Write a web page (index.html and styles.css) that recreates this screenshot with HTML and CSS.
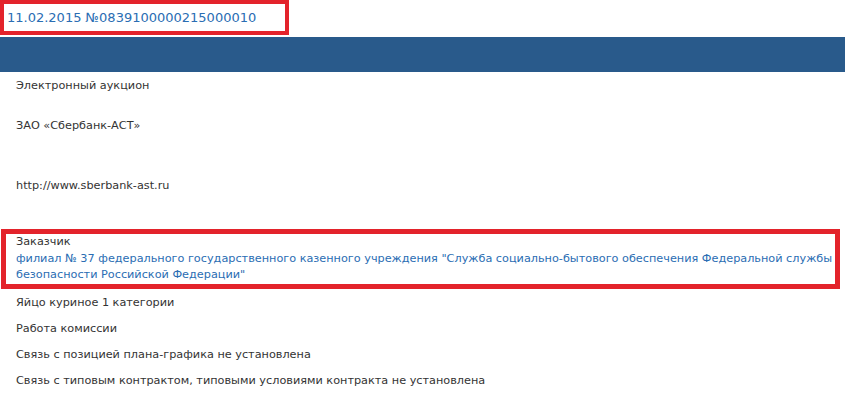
FILE: index.html
```html
<!DOCTYPE html>
<html lang="ru">
<head>
  <meta charset="UTF-8" />
  <title>Извещение 0839100000215000010</title>
  <link rel="stylesheet" href="styles.css">
</head>
<body>
  <div class="header">
    <div class="title-box">11.02.2015 №0839100000215000010</div>
  </div>
  <div class="bar"></div>

  <div class="content">
    <div class="row">Электронный аукцион</div>
    <div class="row gap-md">ЗАО «Сбербанк-АСТ»</div>
    <div class="row gap-lg">http://www.sberbank-ast.ru</div>

    <div class="customer-box">
      <div class="label">Заказчик</div>
      <a class="link" href="#">филиал № 37 федерального государственного казенного учреждения "Служба социально-бытового обеспечения Федеральной службы безопасности Российской Федерации"</a>
    </div>

    <div class="row">Яйцо куриное 1 категории</div>
    <div class="row">Работа комиссии</div>
    <div class="row">Связь с позицией плана-графика не установлена</div>
    <div class="row">Связь с типовым контрактом, типовыми условиями контракта не установлена</div>
  </div>
</body>
</html>
```

FILE: styles.css
```css
body {
  margin: 0;
  font-family: "DejaVu Sans", sans-serif;
  font-size: 11.25px;
  color: #333333;
  background-color: white;
}

.header {
  height: 37px;
}

.title-box {
  display: inline-block;
  box-sizing: border-box;
  width: 289px;
  height: 35px;
  padding: 6px 0 0 3px;
  border: 4px solid #e3232b;
  color: #2a6db3;
  font-size: 13px;
}

.bar {
  height: 35px;
  background-color: #295a8b;
}

.content {
  display: flex;
  flex-direction: column;
  padding-top: 6px;
}

.row {
  padding-left: 16px;
  line-height: 16px;
  margin-bottom: 10px;
}

.row.gap-md {
  margin-top: 14px;
}

.row.gap-lg {
  margin-top: 34px;
  margin-bottom: 0;
}

.customer-box {
  margin: 35px 5px 6px 1px;
  padding: 0 0 0 10px;
  border: 5px solid #e3232b;
  line-height: 16.5px;
}

.link {
  color: #2a6db3;
  text-decoration: none;
}
```
